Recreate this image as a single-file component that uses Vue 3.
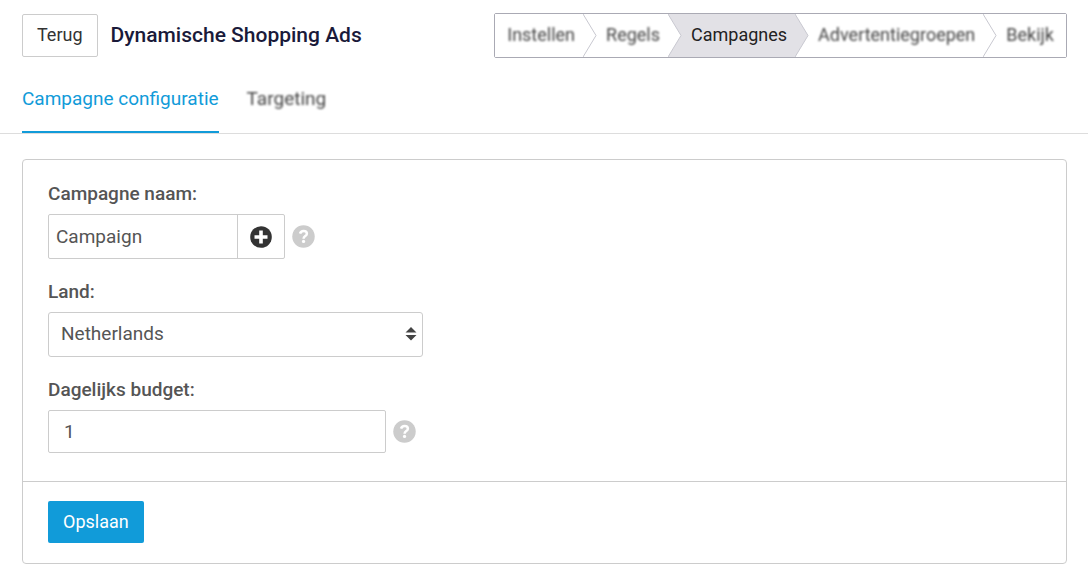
<script setup>
import { ref } from 'vue'

const steps = [
  { name: 'Instellen' },
  { name: 'Regels' },
  { name: 'Campagnes', active: true },
  { name: 'Advertentiegroepen' },
  { name: 'Bekijk' },
]
const campaign = ref('Campaign')
const country = ref('Netherlands')
const budget = ref('1')
</script>

<template>
  <div class="page">
    <header class="header">
      <button type="button" class="button">Terug</button>
      <h1 class="title">Dynamische Shopping Ads</h1>
      <ol class="steps">
        <li v-for="(step, i) in steps" :key="step.name" class="step" :class="{ active: step.active }">
          <a href="#" class="step-link" :class="{ soft: !step.active }" :aria-current="step.active ? 'step' : null">{{ step.name }}</a>
          <svg v-if="i < steps.length - 1" class="chevron" viewBox="0 0 14 43" preserveAspectRatio="none" aria-hidden="true">
            <path class="chevron-fill" d="M0 0L13 21.5L0 43Z" />
            <path class="chevron-line" d="M0 0L13 21.5L0 43" />
          </svg>
        </li>
      </ol>
    </header>

    <nav class="tabs">
      <a href="#" class="tab current" aria-current="page">Campagne configuratie</a>
      <a href="#" class="tab"><span class="soft">Targeting</span></a>
    </nav>

    <form class="card" @submit.prevent>
      <div class="fields">
        <div class="field">
          <label class="label" for="campaign">Campagne naam:</label>
          <div class="row">
            <div class="group">
              <input id="campaign" v-model="campaign" class="group-input" type="text" />
              <button type="button" class="add" aria-label="Toevoegen">
                <svg width="22" height="22" viewBox="0 0 22 22" aria-hidden="true">
                  <circle cx="11" cy="11" r="10.8" fill="#333" />
                  <path d="M11 4.5V17.5M4.5 11H17.5" stroke="#fff" stroke-width="3.6" />
                </svg>
              </button>
            </div>
            <button type="button" class="help" aria-label="Help">
              <svg width="23" height="23" viewBox="0 0 512 512" aria-hidden="true">
                <circle cx="256" cy="256" r="250" fill="#ccc" />
                <path d="M180 192C190 150 220 134 258 134C302 134 331 157 331 193C331 248 258 245 258 304" fill="none" stroke="#fff" stroke-width="56" />
                <circle cx="257" cy="366" r="36" fill="#fff" />
              </svg>
            </button>
          </div>
        </div>

        <div class="field">
          <label class="label" for="country">Land:</label>
          <div class="select-wrap">
            <select id="country" v-model="country" class="select">
              <option>Netherlands</option>
            </select>
            <svg class="sort" width="12" height="16" viewBox="0 0 12 16" aria-hidden="true">
              <path d="M6 1L11.5 6.5H0.5ZM0.5 9H11.5L6 14.5Z" fill="#444" />
            </svg>
          </div>
        </div>

        <div class="field">
          <label class="label" for="budget">Dagelijks budget:</label>
          <div class="row">
            <input id="budget" v-model="budget" class="budget" type="text" inputmode="numeric" />
            <button type="button" class="help" aria-label="Help">
              <svg width="23" height="23" viewBox="0 0 512 512" aria-hidden="true">
                <circle cx="256" cy="256" r="250" fill="#ccc" />
                <path d="M180 192C190 150 220 134 258 134C302 134 331 157 331 193C331 248 258 245 258 304" fill="none" stroke="#fff" stroke-width="56" />
                <circle cx="257" cy="366" r="36" fill="#fff" />
              </svg>
            </button>
          </div>
        </div>
      </div>

      <div class="footer">
        <button type="submit" class="save">Opslaan</button>
      </div>
    </form>
  </div>
</template>

<style>
body {
  margin: 0;
  background: #fff;
}
</style>

<style scoped>
.page,
.page * {
  box-sizing: border-box;
}
.page {
  padding: 13px 0;
  font-family: Roboto, sans-serif;
  font-size: 19px;
  line-height: 24px;
  color: #555;
}
button,
input,
select {
  margin: 0;
  font: inherit;
  color: inherit;
}
button {
  cursor: pointer;
}
a {
  color: inherit;
  text-decoration: none;
}
.header {
  display: flex;
  align-items: center;
  padding: 0 21px 0 22px;
}
.button {
  height: 43px;
  padding: 0 14px 2px;
  border: 1px solid #ccc;
  border-radius: 2px;
  background: #fff;
  font-size: 18px;
  color: #333;
}
.title {
  margin: 0 auto 0 13px;
  padding-bottom: 2px;
  font-size: 21px;
  font-weight: 500;
  color: #1a1a3a;
}
.steps {
  display: flex;
  height: 45px;
  margin: 0;
  padding: 0;
  list-style: none;
  border: 1px solid #aaaab4;
  border-radius: 2px;
  font-size: 18px;
}
.step {
  position: relative;
  display: flex;
  align-items: center;
  padding: 0 8px 2px 23px;
  background: #fff;
}
.step:first-child {
  padding-left: 12px;
}
.step:last-child {
  padding-right: 12px;
}
.step.active {
  background: #e2e1e6;
  color: #222;
}
.soft {
  color: #444;
  filter: blur(1px);
}
.chevron {
  position: absolute;
  z-index: 1;
  top: 0;
  left: 100%;
  width: 14px;
  height: 100%;
}
.chevron-fill {
  fill: #fff;
}
.active .chevron-fill {
  fill: #e2e1e6;
}
.chevron-line {
  fill: none;
  stroke: #c8c8d0;
}
.tabs {
  display: flex;
  gap: 28px;
  margin-bottom: 25px;
  padding: 29px 22px 0;
  border-bottom: 1px solid #ddd;
}
.tab {
  padding-bottom: 20px;
  border-bottom: 2px solid transparent;
}
.tab .soft {
  display: inline-block;
}
.tab.current {
  color: #119bd9;
  border-color: #119bd9;
}
.card {
  margin: 0 21px 0 22px;
  border: 1px solid #ccc;
  border-radius: 4px;
}
.fields {
  display: flex;
  flex-direction: column;
  gap: 21px;
  padding: 22px 25px 28px;
}
.label {
  display: block;
  margin-bottom: 8px;
  font-weight: 500;
}
.row {
  display: flex;
  align-items: center;
  gap: 7px;
}
.group {
  display: flex;
  width: 237px;
  height: 45px;
  border: 1px solid #ccc;
  border-radius: 2px;
}
.group-input {
  flex: 1;
  min-width: 0;
  padding: 0 7px;
  border: 0;
  background: none;
}
.add {
  display: flex;
  align-items: center;
  justify-content: center;
  width: 47px;
  padding: 0;
  border: 0;
  border-left: 1px solid #ccc;
  background: none;
}
.help {
  display: flex;
  padding: 0;
  border: 0;
  background: none;
}
.select-wrap {
  position: relative;
  width: 375px;
}
.select {
  display: block;
  width: 100%;
  height: 45px;
  padding: 0 32px 2px 12px;
  border: 1px solid #ccc;
  border-radius: 3px;
  background: #fff;
  appearance: none;
}
.sort {
  position: absolute;
  top: 14px;
  right: 6px;
  pointer-events: none;
}
.budget {
  width: 338px;
  height: 43px;
  padding: 0 15px;
  border: 1px solid #ccc;
  border-radius: 2px;
  background: #fff;
}
.footer {
  padding: 19px 25px 20px;
  border-top: 1px solid #ccc;
}
.save {
  display: block;
  height: 42px;
  padding: 0 15px;
  border: 0;
  border-radius: 2px;
  background: #119bd9;
  font-size: 18px;
  color: #fff;
}
</style>
